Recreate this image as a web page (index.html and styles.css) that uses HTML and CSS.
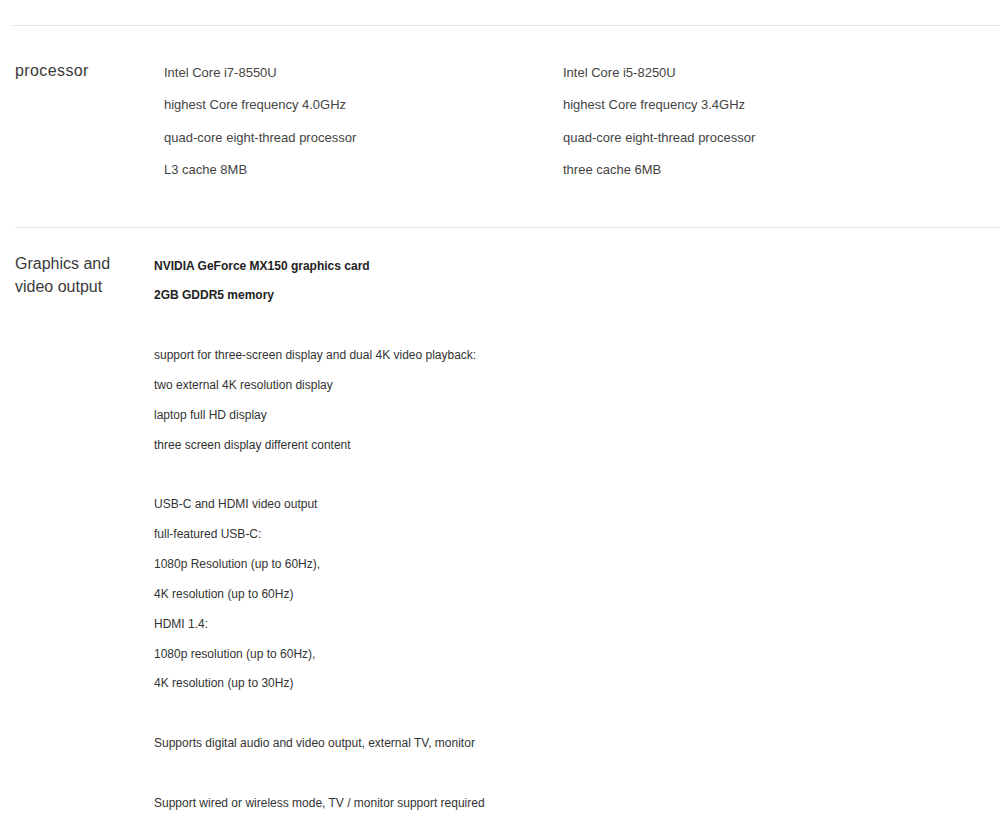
FILE: index.html
```html
<!DOCTYPE html>
<html lang="en">
<head>
    <meta charset="UTF-8">
    <meta name="viewport" content="width=device-width, initial-scale=1.0">
    <title>Specifications</title>
    <link rel="stylesheet" href="styles.css">
</head>
<body>
<div class="specs">
    <div class="spec-row row-processor">
        <div class="spec-label">processor</div>
        <div class="spec-values cols">
            <div class="col">
                <p>Intel Core i7-8550U</p>
                <p>highest Core frequency 4.0GHz</p>
                <p>quad-core eight-thread processor</p>
                <p>L3 cache 8MB</p>
            </div>
            <div class="col">
                <p>Intel Core i5-8250U</p>
                <p>highest Core frequency 3.4GHz</p>
                <p>quad-core eight-thread processor</p>
                <p>three cache 6MB</p>
            </div>
        </div>
    </div>

    <div class="spec-row row-graphics">
        <div class="spec-label">Graphics and video output</div>
        <div class="spec-values list">
            <p><b>NVIDIA GeForce MX150 graphics card</b></p>
            <p><b>2GB GDDR5 memory</b></p>
            <p>&nbsp;</p>
            <p>support for three-screen display and dual 4K video playback:</p>
            <p>two external 4K resolution display</p>
            <p>laptop full HD display</p>
            <p>three screen display different content</p>
            <p>&nbsp;</p>
            <p>USB-C and HDMI video output</p>
            <p>full-featured USB-C:</p>
            <p>1080p Resolution (up to 60Hz),</p>
            <p>4K resolution (up to 60Hz)</p>
            <p>HDMI 1.4:</p>
            <p>1080p resolution (up to 60Hz),</p>
            <p>4K resolution (up to 30Hz)</p>
            <p>&nbsp;</p>
            <p>Supports digital audio and video output, external TV, monitor</p>
            <p>&nbsp;</p>
            <p>Support wired or wireless mode, TV / monitor support required</p>
        </div>
    </div>
</div>
</body>
</html>
```

FILE: styles.css
```css
        body {
            font-family: "Liberation Sans", Arial, sans-serif;
            margin: 0;
            background-color: #ffffff;
            color: #333333;
        }
        .specs {
            padding-top: 25px;
        }
        p {
            margin: 0;
        }
        .spec-row {
            display: flex;
            align-items: flex-start;
            border-top: 1px solid #e8e8e8;
            margin-left: 12px;
        }
        .spec-label {
            width: 125px;
            flex-shrink: 0;
            font-size: 16px;
            line-height: 23px;
            color: #3a3a3a;
        }
        .row-processor {
            padding: 31px 0 40px;
        }
        .row-processor .spec-label {
            padding-left: 3px;
            margin-top: 2px;
            letter-spacing: 0.4px;
        }
        .cols {
            display: flex;
            padding-left: 24px;
        }
        .col {
            width: 399px;
            font-size: 13px;
            line-height: 32.4px;
            color: #444444;
        }
        .row-graphics {
            margin-left: 15px;
            padding: 24px 0 20px;
        }
        .list {
            padding-left: 14px;
            font-size: 12px;
            line-height: 29.85px;
        }
        .list b {
            color: #222222;
        }
```
